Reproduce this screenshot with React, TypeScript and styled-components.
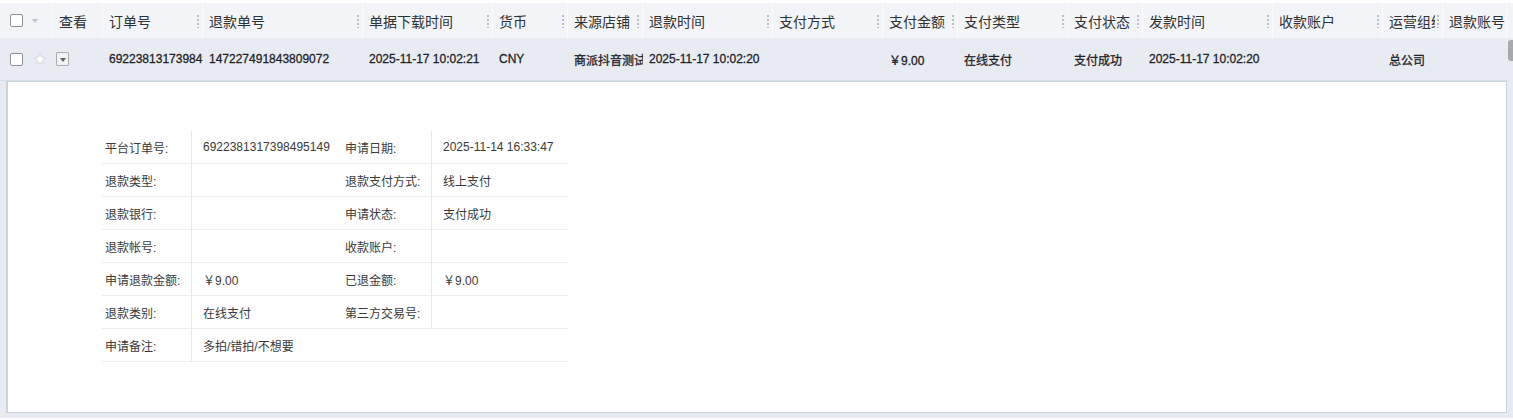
import React from 'react';
import styled, { createGlobalStyle } from 'styled-components';

const GlobalStyle = createGlobalStyle`
  html, body {
    margin: 0;
    padding: 0;
    background: #ffffff;
  }
  body {
    font-family: "Liberation Sans", "Noto Sans CJK SC", sans-serif;
    color: #303133;
  }
`;

interface Column {
  key: string;
  title: string;
  width: number;
  handle?: boolean;
}

const COLUMNS: Column[] = [
  { key: 'view', title: '查看', width: 50 },
  { key: 'orderNo', title: '订单号', width: 100, handle: true },
  { key: 'refundNo', title: '退款单号', width: 160, handle: true },
  { key: 'downloadTime', title: '单据下载时间', width: 130, handle: true },
  { key: 'currency', title: '货币', width: 75, handle: true },
  { key: 'shop', title: '来源店铺', width: 75, handle: true },
  { key: 'refundTime', title: '退款时间', width: 130, handle: true },
  { key: 'payMethod', title: '支付方式', width: 110, handle: true },
  { key: 'payAmount', title: '支付金额', width: 75, handle: true },
  { key: 'payType', title: '支付类型', width: 110, handle: true },
  { key: 'payStatus', title: '支付状态', width: 75, handle: true },
  { key: 'sendTime', title: '发款时间', width: 130, handle: true },
  { key: 'account', title: '收款账户', width: 110, handle: true },
  { key: 'org', title: '运营组织', width: 60, handle: true },
  { key: 'refundAccount', title: '退款账号', width: 64 },
];

const ROW: Record<string, string> = {
  orderNo: '6922381317398495149',
  refundNo: '147227491843809072',
  downloadTime: '2025-11-17 10:02:21',
  currency: 'CNY',
  shop: '商派抖音测试店铺',
  refundTime: '2025-11-17 10:02:20',
  payMethod: '',
  payAmount: '￥9.00',
  payType: '在线支付',
  payStatus: '支付成功',
  sendTime: '2025-11-17 10:02:20',
  account: '',
  org: '总公司',
  refundAccount: '',
};

const DETAIL: [string, string, string?, string?][] = [
  ['平台订单号:', '6922381317398495149', '申请日期:', '2025-11-14 16:33:47'],
  ['退款类型:', '', '退款支付方式:', '线上支付'],
  ['退款银行:', '', '申请状态:', '支付成功'],
  ['退款帐号:', '', '收款账户:', ''],
  ['申请退款金额:', '￥9.00', '已退金额:', '￥9.00'],
  ['退款类别:', '在线支付', '第三方交易号:', ''],
  ['申请备注:', '多拍/错拍/不想要'],
];

const Page = styled.div`
  padding-top: 3px;
  width: 1513px;
`;

const HeaderRow = styled.div`
  display: flex;
  height: 35px;
  background: #f3f4f7;
`;

const HeaderCell = styled.div<{ $w: number }>`
  width: ${({ $w }) => $w}px;
  flex: none;
  display: flex;
  align-items: center;
  box-sizing: border-box;
  padding-left: 6px;
  border-right: 1px solid #fbfbfc;
  font-size: 14px;
  color: #303133;
  overflow: hidden;
`;

const HeaderText = styled.span`
  flex: 1;
  min-width: 0;
  white-space: nowrap;
  overflow: hidden;
`;

const Handle = styled.span`
  flex: none;
  width: 2px;
  height: 14px;
  margin: 0 3px 0 2px;
  background-image: radial-gradient(circle, #b8bcc4 1px, transparent 1.1px);
  background-size: 2px 4px;
  background-repeat: repeat-y;
`;

const SelectCell = styled.div`
  width: 53px;
  flex: none;
  display: flex;
  align-items: center;
  box-sizing: border-box;
  padding-left: 10px;
  gap: 9px;
  border-right: 1px solid #fbfbfc;
`;

const Checkbox = styled.span`
  width: 11px;
  height: 11px;
  border: 1px solid #8e9199;
  border-radius: 2px;
  background: #fff;
  flex: none;
`;

const Caret = styled.span<{ $color?: string }>`
  width: 0;
  height: 0;
  border-left: 3.5px solid transparent;
  border-right: 3.5px solid transparent;
  border-top: 4px solid ${({ $color }) => $color || '#c0c4cc'};
`;

const Body = styled.div`
  display: flex;
  background: #e8ecf2;
`;

const BodyMain = styled.div`
  width: 1507px;
  flex: none;
`;

const ScrollTrack = styled.div`
  width: 6px;
  flex: none;
  padding-top: 2px;
`;

const ScrollThumb = styled.div`
  width: 5px;
  height: 21px;
  margin-left: 1px;
  border-radius: 3px 0 0 3px;
  background: #a7a9ad;
`;

const DataRow = styled.div`
  display: flex;
  height: 42px;
  border-bottom: 1px solid #d7dde7;
`;

const RowSelect = styled.div`
  width: 53px;
  flex: none;
  display: flex;
  align-items: center;
  box-sizing: border-box;
  padding-left: 10px;
  gap: 10px;
`;

const DataCell = styled.div<{ $w: number }>`
  width: ${({ $w }) => $w}px;
  flex: none;
  display: flex;
  align-items: center;
  box-sizing: border-box;
  padding-left: 6px;
  font-size: 12px;
  font-weight: 400;
  color: #1f2329;
  white-space: nowrap;
  overflow: hidden;
  -webkit-text-stroke: 0.3px #1f2329;
`;

const ExpandButton = styled.span`
  width: 11px;
  height: 11px;
  margin-left: -3px;
  border: 1px solid #a9abb0;
  border-radius: 1px;
  background: #f2f2f2;
  display: flex;
  align-items: center;
  justify-content: center;
  padding-top: 1px;
  box-sizing: content-box;
  -webkit-text-stroke: 0;
`;

const ExpandArea = styled.div`
  padding: 0 0 5px 6px;
`;

const Panel = styled.div`
  background: #fff;
  border: 1px solid #c9d3e0;
  border-left-width: 2px;
  height: 332px;
  box-sizing: border-box;
  padding: 49px 0 0 94px;
`;

const DetailGrid = styled.div`
  display: grid;
  grid-template-columns: 90px 150px 90px 136px;
  width: 466px;
  font-size: 12px;
  color: #3a3a3a;
`;

const DetailCell = styled.div<{ $label?: boolean; $line?: boolean; $span?: number }>`
  height: 33px;
  display: flex;
  align-items: center;
  box-sizing: border-box;
  padding-left: ${({ $label }) => ($label ? '3px' : '11px')};
  border-bottom: 1px solid #eeeeee;
  border-right: ${({ $line }) => ($line ? '1px solid #e6e6e6' : 'none')};
  grid-column: ${({ $span }) => ($span ? `span ${$span}` : 'auto')};
  white-space: nowrap;
`;

const Star = () => (
  <svg width="14" height="14" viewBox="0 0 24 24" fill="none">
    <polygon
      points="12,2.5 14.9,8.7 21.6,9.4 16.6,13.9 18,20.6 12,17.2 6,20.6 7.4,13.9 2.4,9.4 9.1,8.7"
      stroke="#d4d6da"
      strokeWidth="1.6"
      strokeLinejoin="round"
      fill="#ffffff"
    />
  </svg>
);

const App: React.FC = () => (
  <Page>
    <GlobalStyle />
    <HeaderRow>
      <SelectCell>
        <Checkbox />
        <Caret />
      </SelectCell>
      {COLUMNS.map((c) => (
        <HeaderCell key={c.key} $w={c.width}>
          <HeaderText>{c.title}</HeaderText>
          {c.handle && <Handle />}
        </HeaderCell>
      ))}
    </HeaderRow>
    <Body>
      <BodyMain>
        <DataRow>
          <RowSelect>
            <Checkbox />
            <Star />
          </RowSelect>
          {COLUMNS.map((c) => (
            <DataCell key={c.key} $w={c.width}>
              {c.key === 'view' ? (
                <ExpandButton>
                  <Caret $color="#606266" />
                </ExpandButton>
              ) : (
                ROW[c.key]
              )}
            </DataCell>
          ))}
        </DataRow>
        <ExpandArea>
          <Panel>
            <DetailGrid>
              {DETAIL.map(([l1, v1, l2, v2], i) =>
                l2 === undefined ? (
                  <React.Fragment key={i}>
                    <DetailCell $label $line>{l1}</DetailCell>
                    <DetailCell $span={3}>{v1}</DetailCell>
                  </React.Fragment>
                ) : (
                  <React.Fragment key={i}>
                    <DetailCell $label $line>{l1}</DetailCell>
                    <DetailCell>{v1}</DetailCell>
                    <DetailCell $label $line>{l2}</DetailCell>
                    <DetailCell>{v2}</DetailCell>
                  </React.Fragment>
                )
              )}
            </DetailGrid>
          </Panel>
        </ExpandArea>
      </BodyMain>
      <ScrollTrack>
        <ScrollThumb />
      </ScrollTrack>
    </Body>
  </Page>
);

export default App;
